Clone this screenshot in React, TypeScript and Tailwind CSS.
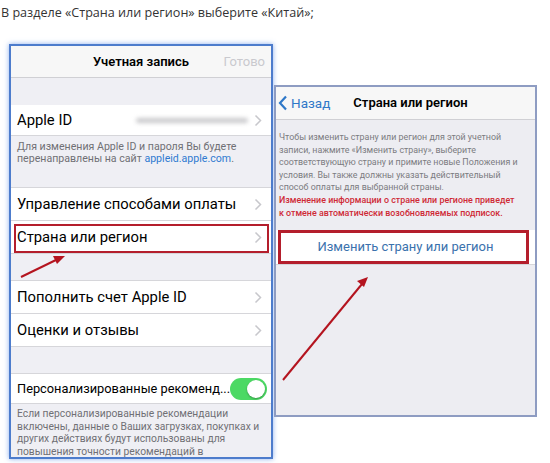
import React from "react";

function Chevron() {
  return (
    <svg width="8" height="13" viewBox="0 0 8 13" className="shrink-0">
      <path d="M1.5 1.5l5 5-5 5" fill="none" stroke="#c7c7cc" strokeWidth="1.5" />
    </svg>
  );
}

function Row({ label }: { label: string }) {
  return (
    <div className="flex items-center justify-between h-[32px] pl-[6px] pr-[9px] bg-white">
      <span className="text-[14.8px] text-black whitespace-nowrap">{label}</span>
      <Chevron />
    </div>
  );
}

function Sep() {
  return <div className="h-px bg-[#d6d6da]" />;
}

export default function App() {
  return (
    <div className="relative w-[550px] h-[463px] bg-white overflow-hidden font-['Roboto',sans-serif]">
      {/* Heading */}
      <p className="pl-[1px] pt-[4px] text-[12.6px] leading-[18px] text-[#333] font-['Open_Sans',sans-serif]">
        В разделе «Страна или регион» выберите «Китай»;
      </p>

      <div className="flex items-start">
        {/* Left phone screen */}
        <div className="ml-[9px] mt-[22px] w-[264px] h-[415px] border-2 border-[#4d7ccc] shadow-[0_0_5px_rgba(90,140,230,0.7)] bg-[#efeff4] overflow-hidden">
          <div className="relative flex items-center justify-center h-[32px] bg-[#f7f7f7] border-b border-[#d0d0d4]">
            <span className="text-[13px] font-semibold text-black">Учетная запись</span>
            <span className="absolute right-[6px] text-[13px] text-[#c9c9ce]">Готово</span>
          </div>
          <div className="h-[27px]" />

          <div className="flex items-center justify-between h-[31px] pl-[6px] pr-[9px] bg-white border-b border-[#d6d6da]">
            <span className="text-[14.8px] text-black">Apple ID</span>
            <div className="flex items-center gap-[6px]">
              <div className="w-[112px] h-[5px] rounded-full bg-[#c9c9cc] blur-[2px]" />
              <Chevron />
            </div>
          </div>
          <p className="pl-[6px] pr-[4px] pt-[5px] h-[51px] text-[10.6px] leading-[11.5px] text-[#707075] whitespace-nowrap">
            Для изменения Apple ID и пароля Вы будете
            <br />
            перенаправлены на сайт <span className="text-[#2f7bd1]">appleid.apple.com</span>.
          </p>

          <div className="border-t border-[#d6d6da]">
            <Row label="Управление способами оплаты" />
            <Sep />
            <div className="relative">
              <Row label="Страна или регион" />
              <div className="absolute left-[3px] right-[2px] top-[3px] bottom-0 border-2 border-[#b41e2c]" />
            </div>
          </div>
          <div className="h-[27px] border-t border-[#d6d6da]" />

          <div className="border-y border-[#d6d6da]">
            <Row label="Пополнить счет Apple ID" />
            <Sep />
            <Row label="Оценки и отзывы" />
          </div>
          <div className="h-[26px]" />

          <div className="flex items-center justify-between h-[31px] pl-[6px] pr-[4px] bg-white border-y border-[#d6d6da]">
            <span className="text-[12.8px] text-black whitespace-nowrap">Персонализированные рекоменд...</span>
            <div className="flex items-center justify-end w-[37px] h-[22px] rounded-full bg-[#4cd964] p-[2px] shrink-0">
              <div className="w-[18px] h-[18px] rounded-full bg-white shadow-[0_1px_2px_rgba(0,0,0,0.3)]" />
            </div>
          </div>
          <p className="pl-[6px] pt-[4px] text-[10.3px] leading-[12.5px] text-[#707075] whitespace-nowrap">
            Если персонализированные рекомендации
            <br />
            включены, данные о Ваших загрузках, покупках и
            <br />
            других действиях будут использованы для
            <br />
            повышения точности рекомендаций в
          </p>
        </div>

        {/* Right phone screen */}
        <div className="ml-[1px] mt-[63px] w-[263px] h-[332px] border-2 border-[#8e9cc2] bg-[#ededf2] overflow-hidden">
          <div className="relative flex items-center justify-center h-[33px] bg-[#f7f7f7] border-b border-[#d0d0d4]">
            <div className="absolute left-[2px] flex items-center gap-[3px] text-[#2f78c8]">
              <svg width="10" height="16" viewBox="0 0 10 16">
                <path d="M8 1.5L2 8l6 6.5" fill="none" stroke="#2f78c8" strokeWidth="2.2" />
              </svg>
              <span className="text-[13.5px]">Назад</span>
            </div>
            <span className="ml-[10px] text-[13px] font-semibold text-black">Страна или регион</span>
          </div>
          <div className="pl-[3px] pt-[11px] text-[8.9px] leading-[12.6px] whitespace-nowrap">
            <p className="text-[#7b7b80]">
              Чтобы изменить страну или регион для этой учетной
              <br />
              записи, нажмите «Изменить страну», выберите
              <br />
              соответствующую страну и примите новые Положения и
              <br />
              условия. Вы также должны указать действительный
              <br />
              способ оплаты для выбранной страны.
            </p>
            <p className="text-[#cf2a36] font-medium">
              Изменение информации о стране или регионе приведет
              <br />к отмене автоматически возобновляемых подписок.
            </p>
          </div>
          <div className="relative mt-[11px] flex items-center justify-center h-[35px] bg-white border-b border-[#d6d6da]">
            <span className="text-[13px] text-[#3b72ad]">Изменить страну или регион</span>
            <div className="absolute left-[2px] right-[6px] top-0 bottom-0 border-[3px] border-[#b41e2c]" />
          </div>
        </div>
      </div>

      {/* Annotation arrows */}
      <svg className="absolute inset-0 pointer-events-none" width="550" height="463" viewBox="0 0 550 463">
        <line x1="21" y1="277" x2="58" y2="259" stroke="#b4141f" strokeWidth="2" />
        <polygon points="65,256 53,256 57,264" fill="#b4141f" />
        <line x1="283" y1="380" x2="362" y2="284" stroke="#b4141f" strokeWidth="2" />
        <polygon points="368,277 357,281 364,287" fill="#b4141f" />
      </svg>
    </div>
  );
}
